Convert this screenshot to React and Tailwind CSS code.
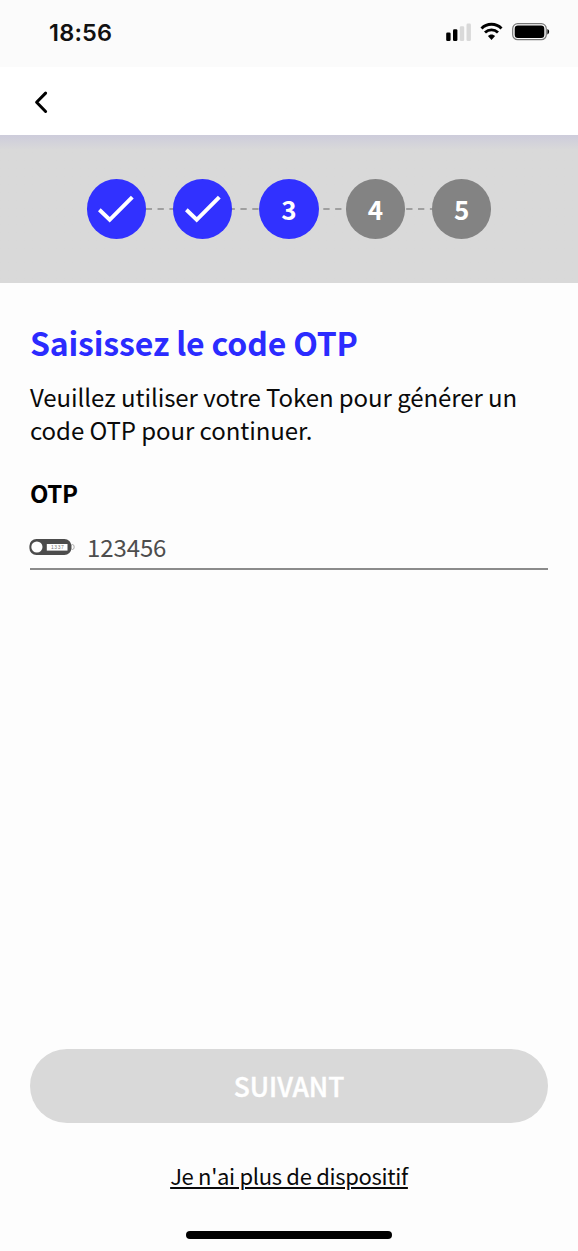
const steps = [
  { id: 1, state: 'done' },
  { id: 2, state: 'done' },
  { id: 3, state: 'current' },
  { id: 4, state: 'todo' },
  { id: 5, state: 'todo' },
];

function StatusBar() {
  return (
    <div className="flex h-[67px] items-start justify-between bg-[#fbfbfb] pl-[49px] pr-[28px] font-['Inter',sans-serif]">
      <span className="mt-[18.5px] text-[23.5px] leading-7 font-semibold tracking-[0.2px] text-[#111]">18:56</span>
      <div className="mt-[22px] flex items-start">
        {/* Signal */}
        <svg className="mt-px h-[19px] w-[26px]" viewBox="0 0 26 19">
          <rect x="0.2" y="9.4" width="4.4" height="8.6" rx="1.3" fill="#000" />
          <rect x="7" y="6.2" width="4.4" height="11.8" rx="1.3" fill="#000" />
          <rect x="13.8" y="3.2" width="4.4" height="14.8" rx="1.3" fill="#d9d9d9" />
          <rect x="20.5" y="0.4" width="4.4" height="17.6" rx="1.3" fill="#d9d9d9" />
        </svg>
        {/* Wifi */}
        <svg className="ml-[8px] h-[18px] w-[23px]" viewBox="0 0 23 18" fill="none" stroke="#000">
          <path d="M1.5 6.5C7 0.9 16 0.9 21.5 6.5" strokeWidth="2.9" />
          <path d="M5 10.5C8.7 7 14.3 7 18 10.5" strokeWidth="2.9" />
          <path d="M11.5 17.9L7.9 14.1C9.8 12 13.2 12 15.1 14.1Z" fill="#000" stroke="none" />
        </svg>
        {/* Battery */}
        <svg className="ml-[9px] h-[19px] w-[38px]" viewBox="0 0 38 19">
          <rect x="0.7" y="1.7" width="33.6" height="16" rx="5" fill="none" stroke="#777" strokeWidth="1.2" />
          <rect x="2.7" y="3.6" width="29.6" height="12.4" rx="3.2" fill="#000" />
          <path d="M35.4 7V12.4C37.7 11.6 37.7 7.8 35.4 7Z" fill="#000" />
        </svg>
      </div>
    </div>
  );
}

function Stepper() {
  return (
    <div className="relative flex h-[148px] items-center justify-center gap-[27px] bg-linear-to-b from-[#cdccdb] via-[#d9d9d9] via-10% to-[#d9d9d9]">
      <svg className="absolute top-[72px] left-[145px] h-[4px] w-[288px]" viewBox="0 0 288 4">
        <path d="M0.7 2H287" stroke="#8c8c8c" strokeWidth="1.7" strokeDasharray="6.3 5.54" />
      </svg>
      {steps.map((step) => (
        <div
          key={step.id}
          className={`relative flex size-[59.4px] items-center justify-center rounded-full text-[26px] leading-none font-bold text-white ${
            step.state === 'todo' ? 'bg-[#838383]' : 'bg-[#3131ff]'
          }`}
        >
          {step.state === 'done' ? (
            <svg className="h-[28px] w-[36px]" viewBox="0 0 36 28" fill="none" stroke="#fff" strokeWidth="4">
              <path d="M1.3 14.8L11.7 24.8L34.3 2.2" />
            </svg>
          ) : (
            <span>{step.id}</span>
          )}
        </div>
      ))}
    </div>
  );
}

function TokenIcon() {
  return (
    <svg className="-ml-px h-[18px] w-[46px]" viewBox="0 0 46 18">
      <ellipse cx="43.4" cy="9" rx="1.8" ry="2.5" fill="none" stroke="#999" strokeWidth="0.8" />
      <rect x="0.4" y="1" width="42" height="16" rx="7" fill="#4c4c4c" />
      <circle cx="7.9" cy="9" r="5.6" fill="#fff" />
      <rect x="17.8" y="6" width="20.7" height="6.6" fill="#fff" />
      <text
        x="28.4"
        y="11.3"
        textAnchor="middle"
        textLength="13"
        fontSize="5"
        fill="#777"
        fontFamily="Liberation Sans, sans-serif"
      >
        1337
      </text>
    </svg>
  );
}

export default function App() {
  return (
    <div className="flex h-[1251px] w-[578px] flex-col overflow-hidden bg-[#fdfdfd] font-['Noto_Sans_CJK_SC',sans-serif] text-[#0a0a0a]">
      <StatusBar />

      {/* Nav bar */}
      <div className="flex h-[68px] items-center bg-white pl-[34px]">
        <svg className="mt-[2px] h-[24px] w-[16px]" viewBox="0 0 16 24" fill="none" stroke="#000" strokeWidth="3" strokeLinecap="round" strokeLinejoin="round">
          <path d="M11.6 3.1L2.6 12.3L11.6 21.5" />
        </svg>
      </div>

      <Stepper />

      {/* Form */}
      <main className="flex flex-1 flex-col px-[30px] pt-[38px]">
        <h1 className="text-[32px] leading-[42px] font-bold tracking-[-0.17px] whitespace-nowrap text-[#2b2bff]">
          Saisissez le code OTP
        </h1>
        <p className="mt-[17px] text-[24px] leading-[33px] tracking-[-0.07px] whitespace-nowrap">
          Veuillez utiliser votre Token pour générer un
          <br />
          code OTP pour continuer.
        </p>
        <label className="mt-[30px] text-[24px] leading-[33px] font-bold tracking-[-0.4px] text-black">OTP</label>
        <div className="mt-[17px] flex h-[44px] items-center border-b-2 border-[#8b8b8b]">
          <TokenIcon />
          <span className="mb-[2px] ml-[12px] text-[24px] leading-[33px] tracking-[-0.1px] text-[#4d4d4d]">123456</span>
        </div>

        <button className="mt-auto h-[74px] w-full rounded-full bg-[#d9d9d9] text-[26.4px] leading-none font-medium text-white [-webkit-text-stroke:0.4px_white]">
          SUIVANT
        </button>
        <a className="mt-[36px] mb-px self-center text-[22px] leading-[33px] tracking-[-0.31px] whitespace-nowrap underline decoration-[1.5px] underline-offset-[2px]">
          Je n'ai plus de dispositif
        </a>
        <div className="mt-[38px] mb-[12px] h-[8px] w-[206px] self-center rounded-full bg-black" />
      </main>
    </div>
  );
}
